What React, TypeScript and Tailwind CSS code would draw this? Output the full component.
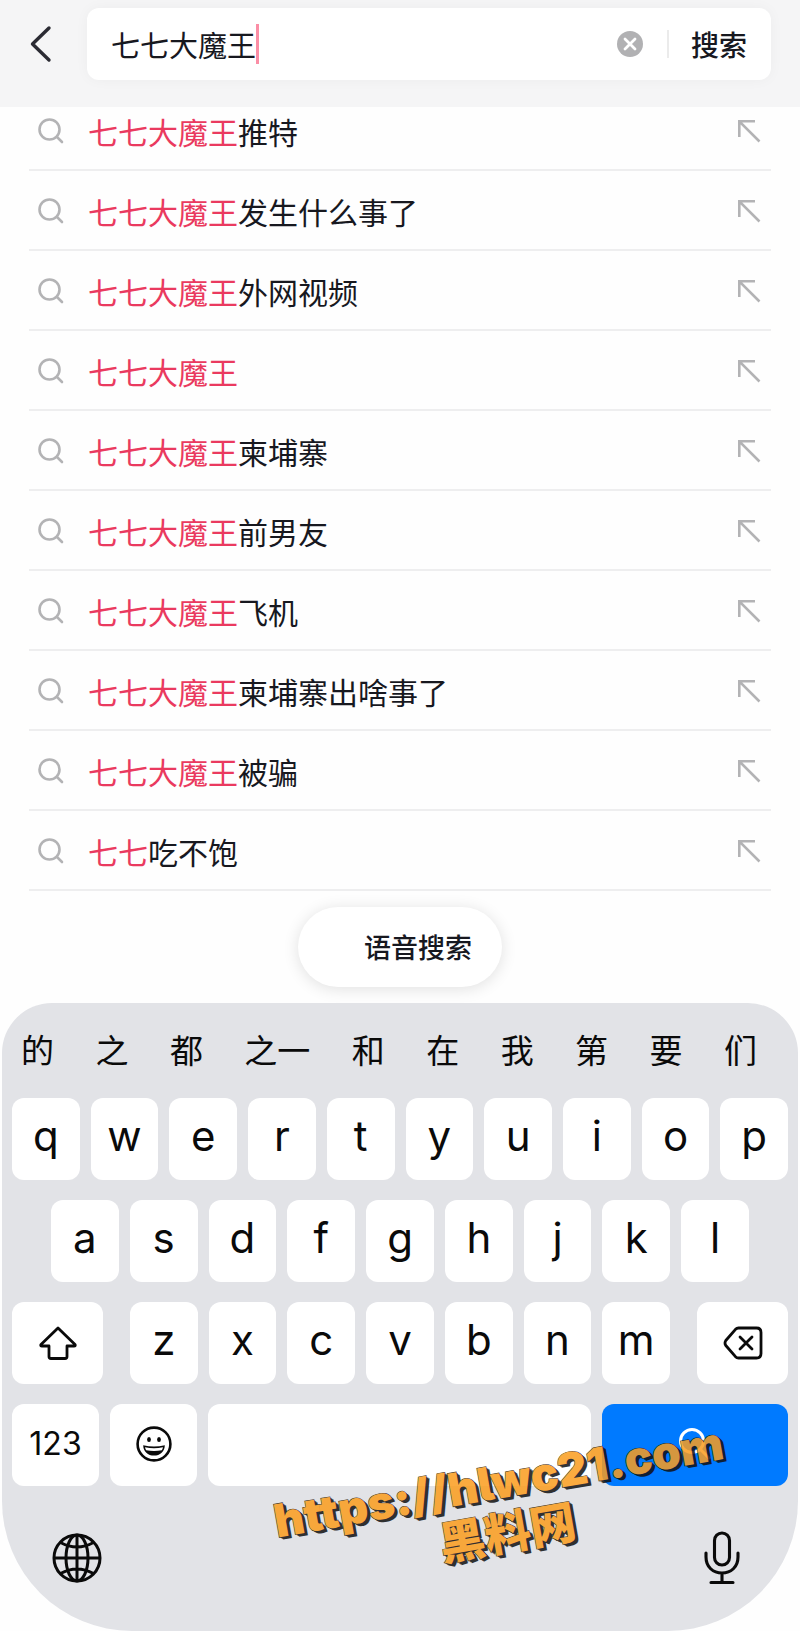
import { ReactNode, useState } from 'react';

interface Suggestion {
  match: string;
  rest: string;
}

const suggestions: Suggestion[] = [
  { match: '七七大魔王', rest: '推特' },
  { match: '七七大魔王', rest: '发生什么事了' },
  { match: '七七大魔王', rest: '外网视频' },
  { match: '七七大魔王', rest: '' },
  { match: '七七大魔王', rest: '柬埔寨' },
  { match: '七七大魔王', rest: '前男友' },
  { match: '七七大魔王', rest: '飞机' },
  { match: '七七大魔王', rest: '柬埔寨出啥事了' },
  { match: '七七大魔王', rest: '被骗' },
  { match: '七七', rest: '吃不饱' },
];

const candidates = ['的', '之', '都', '之一', '和', '在', '我', '第', '要', '们'];

const rows = ['qwertyuiop', 'asdfghjkl', 'zxcvbnm'];

function BackIcon() {
  return (
    <svg width="22" height="38" viewBox="0 0 22 38" fill="none" stroke="#2b2b33" strokeWidth="3.4" strokeLinecap="round" strokeLinejoin="round">
      <path d="M19 3L2.500 19L19 35" />
    </svg>
  );
}

function ClearIcon() {
  return (
    <svg width="26" height="26" viewBox="0 0 26 26" fill="none">
      <circle cx="13" cy="13" r="13" fill="#b1b1b3" />
      <path d="M8 8l10 10M18 8L8 18" stroke="#fff" strokeWidth="2.800" strokeLinecap="round" />
    </svg>
  );
}

function SearchIcon() {
  return (
    <svg width="26" height="26" viewBox="0 0 26 26" fill="none" stroke="#b3b3b5" strokeWidth="2.600" strokeLinecap="round">
      <circle cx="11.500" cy="11.500" r="10" />
      <path d="M19 19l5 5" />
    </svg>
  );
}

function FillIcon() {
  return (
    <svg width="24" height="24" viewBox="0 0 24 24" fill="none" stroke="#b3b3b5" strokeWidth="2.600">
      <path d="M18 2.300H2.300V18M2.300 2.300L22.500 22.500" />
    </svg>
  );
}

function ShiftIcon() {
  return (
    <svg width="38" height="34" viewBox="0 0 38 34" fill="none" stroke="#0a0a0a" strokeWidth="2.800" strokeLinejoin="round">
      <path d="M19 2L36 18.500Q36.800 20 35 20H28V30.500Q28 32.500 26 32.500H12Q10 32.500 10 30.500V20H3Q1.200 20 2 18.500Z" />
    </svg>
  );
}

function DeleteIcon() {
  return (
    <svg width="40" height="34" viewBox="0 0 40 34" fill="none" stroke="#0a0a0a" strokeWidth="2.800" strokeLinecap="round" strokeLinejoin="round">
      <path d="M15.500 2H33.500Q38 2 38 6.500V27.500Q38 32 33.500 32H15.500Q13.800 32 12.500 30.700L2.800 19.500Q1.200 17 2.800 14.500L12.500 3.300Q13.800 2 15.500 2Z" />
      <path d="M17 11l12 12M29 11L17 23" />
    </svg>
  );
}

function EmojiIcon() {
  return (
    <svg width="36" height="36" viewBox="0 0 36 36" fill="none">
      <circle cx="18" cy="18" r="16.400" stroke="#0a0a0a" strokeWidth="2.600" />
      <ellipse cx="13" cy="13.500" rx="1.900" ry="2.600" fill="#0a0a0a" />
      <ellipse cx="23" cy="13.500" rx="1.900" ry="2.600" fill="#0a0a0a" />
      <path d="M7.200 19.200Q18 21.800 28.800 19.200C28.800 25.500 24 29.600 18 29.600S7.200 25.500 7.200 19.200Z" fill="#0a0a0a" />
      <path d="M9 21.300Q18 23.400 27 21.300Q26.600 23.200 25.800 24.200Q18 25.800 10.200 24.200Q9.400 23.200 9 21.300Z" fill="#fff" />
    </svg>
  );
}

function GlobeIcon() {
  return (
    <svg width="50" height="50" viewBox="0 0 50 50" fill="none" stroke="#0a0a0a" strokeWidth="3">
      <circle cx="25" cy="25" r="23" />
      <ellipse cx="25" cy="25" rx="11" ry="23" />
      <path d="M25 2V48M2 25H48M8.500 9.500Q25 18.500 41.500 9.500M8.500 40.500Q25 31.500 41.500 40.500" />
    </svg>
  );
}

function MicIcon() {
  return (
    <svg width="36" height="54" viewBox="0 0 36 54" fill="none" stroke="#0a0a0a" strokeWidth="3.100" strokeLinecap="round">
      <rect x="10.500" y="2" width="15" height="32" rx="7.500" />
      <path d="M2 22V26C2 36 9 42 18 42S34 36 34 26V22M18 42V51.500M7 51.500H29" />
    </svg>
  );
}

function GoIcon() {
  return (
    <svg width="34" height="34" viewBox="0 0 34 34" fill="none" stroke="#fff" strokeWidth="3" strokeLinecap="round">
      <circle cx="14" cy="14" r="11.500" />
      <path d="M22.500 22.500L31 31" />
    </svg>
  );
}

function Key({ label, className, children }: { label: string; className: string; children: ReactNode }) {
  return (
    <button
      type="button"
      aria-label={label}
      className={`flex h-[82px] items-center justify-center rounded-xl text-[#0a0a0a] ${className}`}
    >
      {children}
    </button>
  );
}

function LetterKeys({ letters }: { letters: string }) {
  return (
    <>
      {letters.split('').map((letter) => (
        <Key key={letter} label={letter} className="min-w-0 flex-1 bg-white pb-1.5 text-[42px] leading-none">
          {letter}
        </Key>
      ))}
    </>
  );
}

export default function App() {
  const [query, setQuery] = useState('七七大魔王');

  return (
    <div className="relative w-full overflow-hidden bg-[#fefefe] font-['Noto_Sans_CJK_SC',sans-serif] text-[#17181f]">
      {/* search bar */}
      <header className="flex h-[107px] items-start bg-[#f5f5f6] pt-2 pr-[29px]">
        <button type="button" aria-label="返回" className="flex h-[72px] w-[87px] items-center pl-[30px]">
          <BackIcon />
        </button>
        <form
          className="flex h-[72px] min-w-0 flex-1 items-center rounded-xl bg-white pr-6 pl-6 shadow-[0_0_14px_rgba(0,0,0,0.04)]"
          onSubmit={(e) => e.preventDefault()}
        >
          <input
            type="text"
            aria-label="搜索内容"
            value={query}
            onChange={(e) => setQuery(e.target.value)}
            className="field-sizing-content h-10 max-w-[70%] text-[29px] leading-10 outline-none"
          />
          <span className="h-10 w-[3px] bg-[#fb8ea6]" />
          <button type="button" aria-label="清空" className="ml-auto" onClick={() => setQuery('')}>
            <ClearIcon />
          </button>
          <span className="ml-6 h-7 w-0.5 bg-[#ebebeb]" />
          <button type="submit" className="ml-[22px] text-[28px] leading-10 font-medium">
            搜索
          </button>
        </form>
      </header>

      {/* suggestions slide up under the bar */}
      <ul className="relative -mt-4 px-[29px]">
        {suggestions.map((item) => (
          <li key={item.match + item.rest} className="flex h-20 items-center border-b-2 border-[#eeeeef] pt-0.5 pr-2.5 pl-[9px]">
            <a href="#" className="flex flex-1 items-center gap-6 text-[30px] leading-10">
              <SearchIcon />
              <span>
                <span className="text-[#ea3a5f]">{item.match}</span>
                {item.rest}
              </span>
            </a>
            <button type="button" aria-label={`填入${item.match}${item.rest}`}>
              <FillIcon />
            </button>
          </li>
        ))}
      </ul>

      <div className="flex justify-center py-4">
        <button
          type="button"
          className="h-20 rounded-full bg-white pr-[30px] pl-[66px] text-[27px] leading-10 font-medium shadow-[0_2px_16px_rgba(0,0,0,0.12)]"
        >
          语音搜索
        </button>
      </div>

      {/* keyboard */}
      <section
        aria-label="键盘"
        className="relative mx-0.5 rounded-t-[50px] rounded-b-[130px] bg-[#e2e3e7] px-2.5 font-['Inter','Noto_Sans_CJK_SC',sans-serif]"
      >
        <ul className="flex h-[95px] items-center justify-between pr-[31px] pl-[9px] text-[33px] leading-10 text-[#0a0a0a]">
          {candidates.map((word) => (
            <li key={word}>
              <button type="button">{word}</button>
            </li>
          ))}
        </ul>

        <div className="flex flex-col gap-5">
          <div className="flex gap-[11px]">
            <LetterKeys letters={rows[0]} />
          </div>
          <div className="flex gap-[11px] px-[39px]">
            <LetterKeys letters={rows[1]} />
          </div>
          <div className="flex gap-[27px]">
            <Key label="大写" className="w-[91px] bg-white">
              <ShiftIcon />
            </Key>
            <div className="flex flex-1 gap-[11px]">
              <LetterKeys letters={rows[2]} />
            </div>
            <Key label="删除" className="w-[91px] bg-white">
              <DeleteIcon />
            </Key>
          </div>
          <div className="flex gap-[11px]">
            <Key label="数字" className="w-[87px] bg-white pb-0.5 text-[32px] leading-none">
              123
            </Key>
            <Key label="表情" className="w-[87px] bg-white pb-0.5">
              <EmojiIcon />
            </Key>
            <Key label="空格" className="flex-1 bg-white">
              {null}
            </Key>
            <Key label="前往" className="w-[186px] bg-[#007aff] pb-0.5">
              <GoIcon />
            </Key>
          </div>
        </div>

        <div className="flex h-[145px] items-center justify-between pr-12 pb-0.5 pl-10">
          <button type="button" aria-label="切换输入法">
            <GlobeIcon />
          </button>
          <button type="button" aria-label="听写">
            <MicIcon />
          </button>
        </div>

        {/* site stamp across the lower keys */}
        <p className="pointer-events-none absolute top-[452px] left-[63%] -translate-x-1/2 -rotate-10 text-center text-[46px] leading-[52px] font-black whitespace-nowrap text-[#fb9d1e] opacity-85 [-webkit-text-stroke:1px_#111] [font-feature-settings:'cv05'] [paint-order:stroke_fill] [text-shadow:1px_1px_0_#111,2px_2px_0_#111,3px_3px_0_#111]">
          https://hlwc21.com
          <br />
          黑料网
        </p>
      </section>
    </div>
  );
}
